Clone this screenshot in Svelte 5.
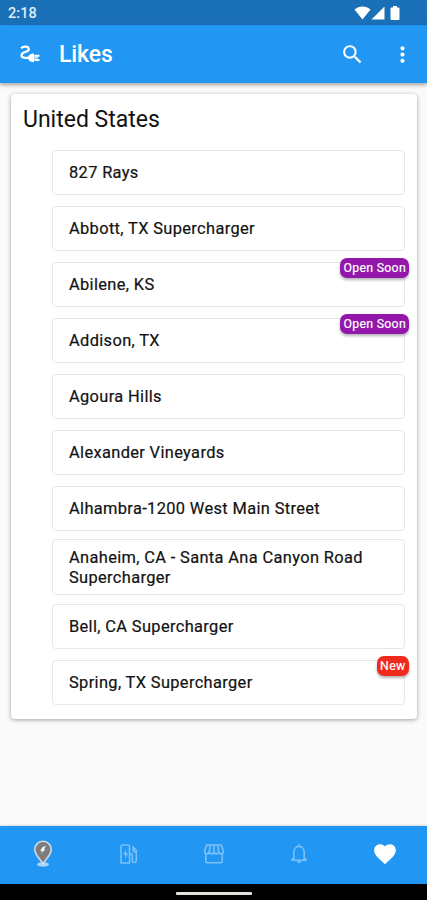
<script lang="ts">
  type Station = { name: string; badge?: 'Open Soon' | 'New'; twoLine?: boolean };

  const country = 'United States';

  const stations: Station[] = [
    { name: '827 Rays' },
    { name: 'Abbott, TX Supercharger' },
    { name: 'Abilene, KS', badge: 'Open Soon' },
    { name: 'Addison, TX', badge: 'Open Soon' },
    { name: 'Agoura Hills' },
    { name: 'Alexander Vineyards' },
    { name: 'Alhambra-1200 West Main Street' },
    { name: 'Anaheim, CA - Santa Ana Canyon Road Supercharger', twoLine: true },
    { name: 'Bell, CA Supercharger' },
    { name: 'Spring, TX Supercharger', badge: 'New' },
  ];
</script>

<div class="screen">
  <div class="status-bar">
    <span class="time">2:18</span>
    <div class="status-icons">
      <svg width="17" height="14" viewBox="0 0 17 14"><path d="M0.5 3.6C5 -0.4 12 -0.4 16.5 3.6L8.5 13.5z" /></svg>
      <svg width="14" height="14" viewBox="0 0 14 14"><path d="M13.5 0.5V13.5H0.5z" /></svg>
      <svg class="battery" width="10" height="14" viewBox="0 0 10 14"><path d="M3 0h4v1.6h1.5Q9.5 1.6 9.5 2.6V13Q9.5 14 8.5 14h-7Q0.5 14 0.5 13V2.6Q0.5 1.6 1.5 1.6H3z" /></svg>
    </div>
  </div>

  <header class="app-bar">
    <svg class="plug" width="20" height="18" viewBox="0 0 20 18">
      <path class="cord" d="M1.2 3.4C2.6 1 8.8 0.7 8.8 4.2C8.8 7.6 1.5 6.4 1.5 10.2C1.5 13 5 13.2 9 12.8" />
      <path d="M8 12.8C8 10.2 10.4 8.6 14 8.6V17.2C10.4 17.2 8 15.4 8 12.8z" />
      <path d="M14.8 9.8h4.6v2h-4.6zM14.8 14h4.6v2h-4.6z" />
      <path class="socket" d="M14 10h4v5.8H14z" />
    </svg>
    <h1>Likes</h1>
    <button class="icon-btn search" aria-label="Search">
      <svg width="25" height="25" viewBox="0 0 24 24"><path d="M15.5 14h-.79l-.28-.27A6.471 6.471 0 0 0 16 9.5 6.5 6.5 0 1 0 9.5 16c1.61 0 3.09-.59 4.23-1.57l.27.28v.79l5 4.99L20.49 19l-4.99-5zm-6 0C7.01 14 5 11.99 5 9.5S7.01 5 9.5 5 14 7.01 14 9.5 11.99 14 9.5 14z" /></svg>
    </button>
    <button class="icon-btn" aria-label="More options">
      <svg width="25" height="25" viewBox="0 0 24 24"><path d="M12 8c1.1 0 2-.9 2-2s-.9-2-2-2-2 .9-2 2 .9 2 2 2zm0 2c-1.1 0-2 .9-2 2s.9 2 2 2 2-.9 2-2-.9-2-2-2zm0 6c-1.1 0-2 .9-2 2s.9 2 2 2 2-.9 2-2-.9-2-2-2z" /></svg>
    </button>
  </header>

  <main>
    <section class="card">
      <h2>{country}</h2>
      <ul>
        {#each stations as station}
          <li class:two-line={station.twoLine}>
            <div class="station">
              {station.name}
              {#if station.badge}
                <span class="badge" class:new={station.badge === 'New'}>{station.badge}</span>
              {/if}
            </div>
          </li>
        {/each}
      </ul>
    </section>
  </main>

  <nav>
    <button aria-label="Map">
      <svg width="22" height="28" viewBox="0 0 22 28">
        <ellipse class="pin-base" cx="11" cy="24.4" rx="6" ry="2.2" />
        <path class="pin" d="M11 24C9.6 20 2.8 15.6 2.8 9.4a8.2 8.2 0 0 1 16.4 0C19.2 15.6 12.4 20 11 24z" />
        <path class="bolt" d="M14.2 5.6L10.2 7.4 8.2 11l2.2-.2-1.4 2.6 4.3-3.8-1.5-.3z" />
      </svg>
    </button>
    <button class="inactive" aria-label="Charging">
      <svg width="20" height="22" viewBox="0 0 20 22">
        <path d="M2 20V3.5Q2 2 3.5 2H9Q10.5 2 10.5 3.5V20zM10.5 11h1.8q1 0 1 1v5.5a2 2 0 0 0 4 0V7.5L13.5 3.4M14.3 5v3.2q.6 1.3 3 1.3" />
        <path class="charge" d="M7.2 6L4.2 11.6h2v4.6l2.8-6h-2z" />
      </svg>
    </button>
    <button class="inactive" aria-label="Stores">
      <svg width="22" height="22" viewBox="0 0 22 22">
        <path d="M3.6 2h14.8l2 6.2c0 3.2-4.2 3.4-4.7.4-.5 3-4.3 3-4.7 0-.4 3-4.2 3-4.7 0-.5 3-4.7 2.8-4.7-.4zM7.3 2l-1 6.6M11 2v6.6M14.7 2l1 6.6M2.8 11v7.5q0 1.3 1.3 1.3h13.8q1.3 0 1.3-1.3V11" />
      </svg>
    </button>
    <button class="inactive" aria-label="Notifications">
      <svg width="20" height="24" viewBox="0 0 20 24">
        <path d="M2.3 18.2h15.4M4.8 18V10.5C4.8 7 6.8 4.4 10 4.4s5.2 2.6 5.2 6.1V18M3 17.8l1.8-2M17 17.8l-1.8-2M10 4.4V2" />
        <path class="clapper" d="M8 19.2h4a2 2 0 0 1-4 0z" />
      </svg>
    </button>
    <button class="active" aria-label="Likes">
      <svg width="26" height="26" viewBox="0 0 24 24"><path d="M12 21.35l-1.45-1.32C5.4 15.36 2 12.28 2 8.5 2 5.42 4.42 3 7.5 3c1.74 0 3.41.81 4.5 2.09C13.09 3.81 14.76 3 16.5 3 19.58 3 22 5.42 22 8.5c0 3.78-3.4 6.86-8.55 11.54L12 21.35z" /></svg>
    </button>
  </nav>

  <div class="gesture-bar"><span></span></div>
</div>

<style>
  :global(body) {
    margin: 0;
  }

  .screen {
    display: flex;
    flex-direction: column;
    height: 900px;
    overflow: hidden;
    background: #fafafa;
    color: #121212;
    font-family: Roboto, sans-serif;
  }

  svg {
    display: block;
    fill: #fff;
  }

  button {
    display: flex;
    align-items: center;
    justify-content: center;
    padding: 0;
    border: none;
    background: none;
  }

  .status-bar {
    display: flex;
    flex: none;
    align-items: center;
    justify-content: space-between;
    box-sizing: border-box;
    height: 25px;
    padding: 2px 27px 1px 8px;
    background: #1a70b7;
  }

  .time {
    padding-top: 1px;
    color: #dcecf9;
    font-size: 14.5px;
    font-weight: 500;
    letter-spacing: 0.1px;
  }

  .status-icons {
    display: flex;
  }

  .battery {
    margin-left: 5px;
  }

  .app-bar {
    display: flex;
    flex: none;
    align-items: center;
    box-sizing: border-box;
    height: 58px;
    padding: 0 12px 0 20px;
    background: #2196f3;
    box-shadow: 0 2px 4px rgba(0, 0, 0, 0.35);
  }

  .plug .cord {
    fill: none;
    stroke: #fff;
    stroke-width: 2.3;
  }

  .plug .socket {
    opacity: 0.6;
  }

  h1 {
    flex: 1;
    margin: 2px 0 0 19px;
    color: #fff;
    font-size: 23px;
    font-weight: 500;
    line-height: 28px;
    letter-spacing: -0.1px;
  }

  .search {
    margin-right: 25px;
  }

  main {
    flex: 1;
    padding: 11px 10px 0 11px;
  }

  .card {
    box-sizing: border-box;
    height: 625px;
    padding: 11px 12px 0;
    border-radius: 4px;
    background: #fff;
    box-shadow: 0 1px 4px rgba(0, 0, 0, 0.36);
  }

  h2 {
    margin: 0;
    font-size: 23px;
    font-weight: 400;
    line-height: 30px;
  }

  ul {
    margin: 9px 0 0 29px;
    padding: 0;
    list-style: none;
  }

  li {
    padding: 5.5px 0;
  }

  li.two-line {
    padding: 3px 0;
  }

  .station {
    position: relative;
    display: flex;
    align-items: center;
    box-sizing: border-box;
    min-height: 45px;
    padding: 8px 16px 6px;
    border: 1px solid #e7e7e7;
    border-radius: 4px;
    font-size: 16.4px;
    line-height: 20px;
    letter-spacing: 0.36px;
    -webkit-text-stroke: 0.2px #121212;
  }

  .badge {
    position: absolute;
    top: -5px;
    right: -5px;
    padding: 0 3px;
    border-radius: 7px;
    background: #9317ab;
    box-shadow: 0 2px 3px rgba(0, 0, 0, 0.3);
    color: #fff;
    font-size: 12.3px;
    line-height: 20px;
    letter-spacing: 0.3px;
    -webkit-text-stroke: 0.2px #fff;
  }

  .badge.new {
    padding: 0 3.5px;
    background: #f0291d;
  }

  nav {
    display: flex;
    flex: none;
    height: 58px;
    background: #2196f3;
    box-shadow: 0 -1px 2px rgba(0, 0, 0, 0.12);
  }

  nav button {
    flex: 1;
    padding: 0 0 3px 1px;
  }

  .inactive path {
    fill: none;
    stroke: #7cc1f8;
    stroke-width: 1.6;
  }

  .inactive .clapper,
  .inactive .charge {
    fill: #7cc1f8;
    stroke: none;
  }

  .pin {
    fill: #7d7d7f;
    stroke: #d5dbe0;
    stroke-width: 1.6;
  }

  .pin-base {
    fill: #a9d5f8;
  }

  .gesture-bar {
    display: flex;
    flex: none;
    justify-content: center;
    align-items: center;
    height: 16px;
    background: #000;
  }

  .gesture-bar span {
    width: 76px;
    height: 3px;
    margin-top: 2px;
    border-radius: 1px;
    background: #e4e0dc;
  }
</style>
